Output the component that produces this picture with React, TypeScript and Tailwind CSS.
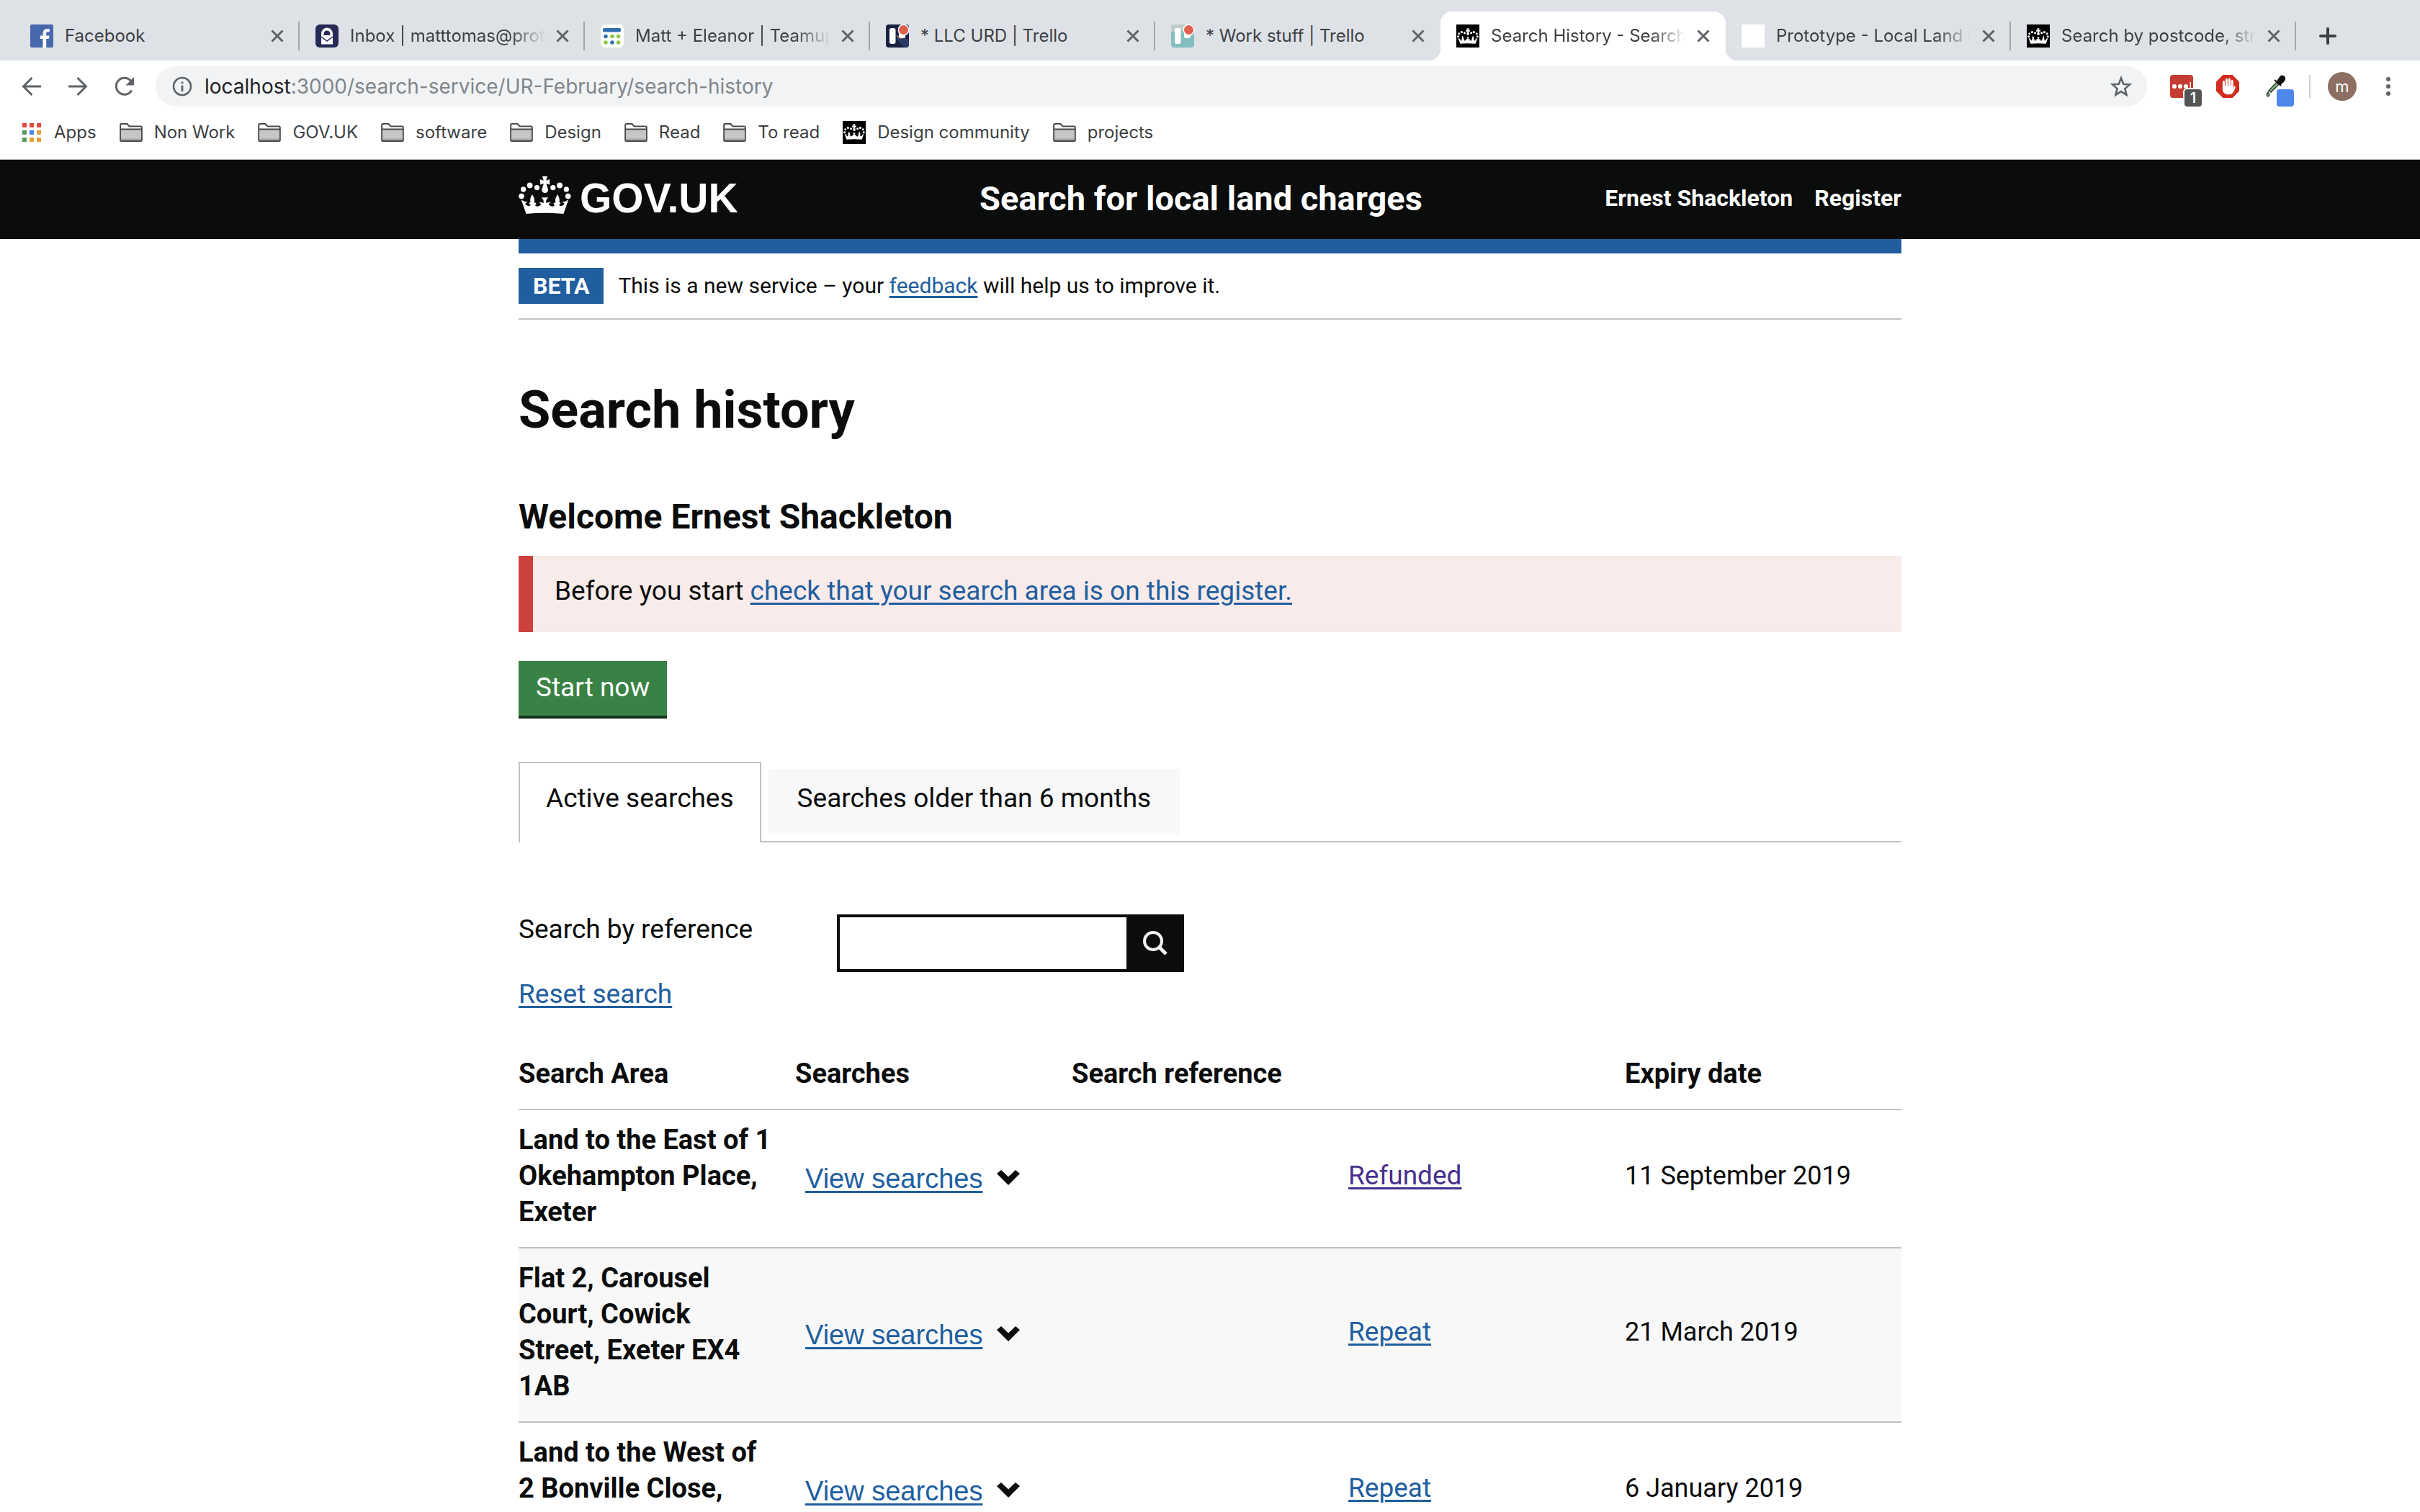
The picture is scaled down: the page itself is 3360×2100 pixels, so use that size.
import React, { useState } from "react";

const LINK = "text-[#205e9f] underline decoration-[3px] underline-offset-[4px]";

function Crown({ className }: { className?: string }) {
  return (
    <svg viewBox="28 38 220 162" className={className} fill="currentColor" aria-hidden="true">
      <circle cx="40" cy="124" r="11.5" />
      <circle cx="48" cy="95" r="11" />
      <circle cx="75" cy="79" r="12" />
      <circle cx="105" cy="88" r="11" />
      <circle cx="172" cy="88" r="11" />
      <circle cx="200" cy="79" r="12" />
      <circle cx="228" cy="95" r="11" />
      <circle cx="235" cy="124" r="11.5" />
      <path d="M127 40H149L143 58 158 53V76L144 71 152 97A13.5 13.5 0 1 1 125 97L133 71 118 76V53L133 58Z" />
      <path d="M39 138L52 146 66 148 56 154C62 168 76 166 80 160C72 160 70 150 78 149C74 136 80 124 85 116C92 126 97 138 93 150C102 150 106 158 96 161C102 170 116 168 122 158L114 148 133 152C134 142 130 136 124 129H152C146 136 142 142 143 152L162 148 154 158C160 168 174 170 180 161C170 158 174 150 183 150C179 138 184 126 191 116C196 124 202 136 198 149C206 150 204 160 196 160C200 166 214 168 220 154L210 148 224 146 237 138L216 198Q138 190 60 198Z" />
    </svg>
  );
}

function CrownIcon() {
  return (
    <span className="flex size-8 shrink-0 items-center justify-center bg-black text-white">
      <Crown className="w-[30px]" />
    </span>
  );
}

function FacebookIcon() {
  return (
    <svg viewBox="0 0 32 32" className="size-8 shrink-0" aria-hidden="true">
      <rect width="32" height="32" rx="2" fill="#4868ad" />
      <path d="M17.5 32V20H14v-4.500h3.500V12.300C17.500 8.300 20 6 23.700 6c1.400 0 2.600.1 3.100.2v4h-2.200c-1.800 0-2.400.9-2.400 2.300v3h4.400l-.6 4.500h-3.800v12z" fill="#fff" />
    </svg>
  );
}

function ProtonIcon() {
  return (
    <svg viewBox="0 0 32 32" className="size-8 shrink-0" aria-hidden="true">
      <rect width="32" height="32" rx="6" fill="#262a55" />
      <path d="M8 13a8 8.500 0 0 1 16 0v14.500H8z" fill="#fff" />
      <path d="M11.500 13a4.500 4.500 0 0 1 9 0v2h-9z" fill="#262a55" />
      <path d="M8 17l8 6 8-6" fill="none" stroke="#262a55" strokeWidth="1.500" />
    </svg>
  );
}

function CalendarIcon() {
  return (
    <svg viewBox="0 0 32 32" className="size-8 shrink-0" aria-hidden="true">
      <rect width="32" height="32" rx="6" fill="#fff" />
      <rect x="3" y="5" width="25" height="5.500" rx="2" fill="#2f6eb0" />
      <circle cx="7" cy="16.500" r="2.700" fill="#2f6eb0" />
      <circle cx="16" cy="16.500" r="2.700" fill="#8cc63f" />
      <circle cx="24.500" cy="16.500" r="2.700" fill="#8cc63f" />
      <circle cx="7" cy="25" r="2.700" fill="#8cc63f" />
      <circle cx="16" cy="25" r="2.700" fill="#2f6eb0" />
      <circle cx="24.500" cy="25" r="2.700" fill="#8cc63f" />
    </svg>
  );
}

function BoardIcon({ dark }: { dark?: boolean }) {
  return (
    <svg viewBox="0 0 32 32" className="size-8 shrink-0 overflow-visible" aria-hidden="true">
      <rect width="32" height="32" rx="4" fill={dark ? "#1b2145" : "#84bfc0"} />
      {dark ? <path d="M14 20l8-4 10 6v4a6 6 0 0 1-6 6z" fill="#2c3a66" /> : <path d="M4 0h24a4 4 0 0 1 4 4v3L0 10V4a4 4 0 0 1 4-4z" fill="#c4cfcc" />}
      {dark && <path d="M14 16l8-3 6 6-10 1z" fill="#8a5b5c" />}
      <rect x="5" y="5" width="8.500" height="22" rx="3" fill="#fff" />
      <rect x="18" y="5" width="9" height="14" rx="3" fill="#fff" />
      <circle cx="24.500" cy="7.500" r="8" fill="#fff" />
      <circle cx="24.500" cy="7.500" r="6.500" fill="#e0604d" />
    </svg>
  );
}

const TABS = [
  { title: "Facebook", icon: <FacebookIcon /> },
  { title: "Inbox | matttomas@prot", icon: <ProtonIcon />, fade: true },
  { title: "Matt + Eleanor | Teamup", icon: <CalendarIcon />, fade: true },
  { title: "* LLC URD | Trello", icon: <BoardIcon dark /> },
  { title: "* Work stuff | Trello", icon: <BoardIcon /> },
  { title: "Search History - Search", icon: <CrownIcon />, fade: true, active: true },
  { title: "Prototype - Local Land C", icon: <span className="size-8 shrink-0 bg-white" />, fade: true },
  { title: "Search by postcode, str", icon: <CrownIcon />, fade: true },
];

function TabStrip() {
  return (
    <div className="flex h-[84px] items-end bg-[#dee1e6] pl-5">
      {TABS.map((tab, i) => (
        <div
          key={tab.title}
          className={
            tab.active
              ? "relative flex h-[68px] min-w-0 basis-[396px] items-center rounded-t-2xl bg-white pl-[22px]"
              : "flex h-[68px] min-w-0 basis-[396px] items-center pl-[22px]"
          }
        >
          {tab.active && (
            <>
              <span className="absolute bottom-0 -left-4 size-4 bg-[radial-gradient(circle_at_0_0,transparent_16px,white_16px)]" />
              <span className="absolute -right-4 bottom-0 size-4 bg-[radial-gradient(circle_at_100%_0,transparent_16px,white_16px)]" />
            </>
          )}
          {tab.icon}
          <span
            className={
              tab.fade
                ? "ml-4 min-w-0 flex-1 overflow-hidden whitespace-nowrap [mask-image:linear-gradient(to_right,black_calc(100%-52px),transparent_calc(100%-4px))]"
                : "ml-4 min-w-0 flex-1 overflow-hidden whitespace-nowrap"
            }
          >
            {tab.title}
          </span>
          <button type="button" aria-label={"Close " + tab.title} className="ml-1 flex size-8 shrink-0 items-center justify-center">
            <svg viewBox="0 0 18 18" className="size-[18px]" stroke="#5f6368" strokeWidth="3" aria-hidden="true">
              <path d="M1.500 1.500l15 15M16.500 1.500l-15 15" />
            </svg>
          </button>
          <span
            className={
              tab.active || TABS[i + 1]?.active
                ? "ml-[13px] h-10 w-[2px] shrink-0"
                : "ml-[13px] h-10 w-[2px] shrink-0 bg-[#a2a5aa]"
            }
          />
        </div>
      ))}
      <button type="button" aria-label="New tab" className="ml-7 flex h-[68px] w-8 shrink-0 items-center justify-center">
        <svg viewBox="0 0 24 24" className="size-6" stroke="#3c4043" strokeWidth="4" strokeLinecap="round" aria-hidden="true">
          <path d="M12 2v20M2 12h20" />
        </svg>
      </button>
    </div>
  );
}

function Toolbar() {
  return (
    <div className="flex h-[72px] items-center gap-8 bg-white pl-7">
      <button type="button" aria-label="Back" className="size-8">
        <svg viewBox="0 0 32 32" className="size-8" fill="none" stroke="#5f6368" strokeWidth="3" aria-hidden="true">
          <path d="M29 16H5M16.500 4L4.500 16l12 12" />
        </svg>
      </button>
      <button type="button" aria-label="Forward" className="size-8">
        <svg viewBox="0 0 32 32" className="size-8" fill="none" stroke="#5f6368" strokeWidth="3" aria-hidden="true">
          <path d="M3 16h24M15.500 4l12 12-12 12" />
        </svg>
      </button>
      <button type="button" aria-label="Reload" className="size-8">
        <svg viewBox="0 0 32 32" className="size-8" aria-hidden="true">
          <path d="M26.800 21.500A11.500 11.500 0 1 1 25.500 8.200" fill="none" stroke="#5f6368" strokeWidth="3" />
          <path d="M30 3v11.500H18.500z" fill="#5f6368" />
        </svg>
      </button>
      <div className="-ml-1 flex h-14 min-w-0 flex-1 items-center rounded-full bg-[#f1f3f4] pr-5 pl-[23px]">
        <svg viewBox="0 0 28 28" className="size-7 shrink-0" aria-hidden="true">
          <circle cx="14" cy="14" r="12" fill="none" stroke="#5f6368" strokeWidth="2.600" />
          <path d="M12.600 12.500h2.800V21h-2.800zM12.600 7.500h2.800v2.800h-2.800z" fill="#5f6368" />
        </svg>
        <span className="ml-[17px] flex-1 text-[28px] text-[#80868b]">
          <span className="text-[#202124]">localhost</span>:3000/search-service/UR-February/search-history
        </span>
        <button type="button" aria-label="Bookmark this page" className="size-8">
          <svg viewBox="0 0 32 32" className="size-8" fill="none" stroke="#5f6368" strokeWidth="2.600" aria-hidden="true">
            <path d="M16 4.500l3.300 8.200 8.800.7-6.700 5.700 2.100 8.600L16 23.100l-7.500 4.600 2.100-8.600-6.700-5.700 8.800-.7z" />
          </svg>
        </button>
      </div>
      <div className="flex items-center pr-7">
        <button type="button" aria-label="Password manager, 1 entry" className="relative size-8 rounded-sm bg-[#c43d33]">
          <svg viewBox="0 0 32 32" className="size-8" fill="#fff" aria-hidden="true">
            <circle cx="6" cy="16" r="3" />
            <circle cx="14" cy="16" r="3" />
            <circle cx="22" cy="16" r="3" />
            <path d="M27.500 10h1.500v11h-1.500z" />
          </svg>
          <span className="absolute top-[18px] left-[18px] flex h-[28px] w-[28px] items-center justify-center rounded-md border-2 border-white bg-[#555] text-[20px] leading-none font-semibold text-white">
            1
          </span>
        </button>
        <button type="button" aria-label="Ad blocker" className="ml-8 size-8">
          <svg viewBox="0 0 32 32" className="size-8" aria-hidden="true">
            <path d="M9.400 0h13.200L32 9.400v13.200L22.600 32H9.400L0 22.600V9.400z" fill="#d22d20" />
            <path d="M10.400 18V9.500M14.400 16V6.500M18.400 16V6M22.200 17V8.500" fill="none" stroke="#fff" strokeWidth="3" strokeLinecap="round" />
            <path d="M8.900 15h14.800v3.500l1.200-2.300c.8-1 2-.4 1.800.7-.7 3-1.800 5.600-3.200 7.700-1.500 2.100-3.600 2.700-6.200 2.700-5 0-8.400-2.800-8.400-7.300z" fill="#fff" />
          </svg>
        </button>
        <button type="button" aria-label="Colour picker" className="relative ml-9 size-8">
          <svg viewBox="0 0 32 32" className="size-8" aria-hidden="true">
            <path d="M5 22L16 10l3 3L8 24z" fill="#7cc07c" stroke="#333" strokeWidth="1.500" />
            <path d="M13 7l9 8M17 9l4-6c2-3 7-1 6 3-.5 3-3 4-6 7z" fill="#111" stroke="#111" strokeWidth="2" />
            <path d="M4 24c3 3 2 6 0 6s-3-3 0-6z" fill="#5aa05a" stroke="#333" strokeWidth="1.200" />
          </svg>
          <span className="absolute top-5 left-4 size-6 rounded-sm bg-[#4f86ec]" />
        </button>
        <span className="ml-[29px] h-8 w-[2px] bg-[#d0d2d5]" />
        <button type="button" aria-label="Profile" className="ml-6 flex size-10 items-center justify-center rounded-full bg-[#8c6e63] text-[22px] leading-none text-white">
          m
        </button>
        <button type="button" aria-label="Menu" className="ml-7 flex h-8 w-8 items-center justify-center">
          <svg viewBox="0 0 8 28" className="h-7" fill="#5f6368" aria-hidden="true">
            <circle cx="4" cy="4" r="3" />
            <circle cx="4" cy="14" r="3" />
            <circle cx="4" cy="24" r="3" />
          </svg>
        </button>
      </div>
    </div>
  );
}

function FolderIcon() {
  return (
    <svg viewBox="0 0 32 28" className="h-7 w-8 shrink-0" aria-hidden="true">
      <path d="M1.200 24.500V3.500a1.500 1.500 0 0 1 1.500-1.500h7.800l3 3.500h15.800a1.500 1.500 0 0 1 1.500 1.500v17.500a1.500 1.500 0 0 1-1.500 1.500H2.700a1.500 1.500 0 0 1-1.500-1.500z" fill="#fff" stroke="#484848" strokeWidth="2" />
      <path d="M2 10h28v14.800H2z" fill="#c6c6c6" />
      <path d="M2 22.500h28v2.500H2z" fill="#a6a6a6" />
      <path d="M1.200 9.500h29.600" stroke="#484848" strokeWidth="2" />
    </svg>
  );
}

function AppsIcon() {
  const colors = ["#e2493d", "#e2493d", "#e2493d", "#549b5c", "#4285f4", "#e2a33b", "#549b5c", "#e2a33b", "#e2a33b"];
  return (
    <span className="grid size-[26px] shrink-0 grid-cols-3 gap-1" aria-hidden="true">
      {colors.map((c, i) => (
        <span key={i} style={{ backgroundColor: c }} />
      ))}
    </span>
  );
}

const BOOKMARKS = ["Non Work", "GOV.UK", "software", "Design", "Read", "To read", "Design community", "projects"];

function BookmarksBar() {
  return (
    <nav aria-label="Bookmarks" className="flex h-[66px] items-center gap-8 border-b border-[#b6b4b6] bg-white pb-[10px] pl-[31px]">
      <a href="#apps" className="flex items-center gap-[18px]">
        <AppsIcon />
        Apps
      </a>
      {BOOKMARKS.map((name) => (
        <a key={name} href="#bookmark" className="flex items-center gap-4 whitespace-nowrap">
          {name === "Design community" ? <CrownIcon /> : <FolderIcon />}
          {name}
        </a>
      ))}
    </nav>
  );
}

function Header() {
  return (
    <header className="bg-[#0b0c0c] text-white">
      <div className="mx-auto flex h-[110px] max-w-[1920px] items-center pb-1 font-bold">
        <a href="#home" className="flex w-1/3 items-center gap-3 font-['Liberation_Sans',sans-serif] text-[57px] leading-none">
          <Crown className="mb-2 w-[73px]" />
          GOV.UK
        </a>
        <a href="#service" className="text-[47px] leading-none whitespace-nowrap">
          Search for local land charges
        </a>
        <nav aria-label="Account" className="flex flex-1 justify-end gap-[30px] text-[32px] leading-none whitespace-nowrap">
          <a href="#account">Ernest Shackleton</a>
          <a href="#register">Register</a>
        </nav>
      </div>
    </header>
  );
}

const ROWS = [
  { area: "Land to the East of 1 Okehampton Place, Exeter", action: "Refunded", expiry: "11 September 2019" },
  { area: "Flat 2, Carousel Court, Cowick Street, Exeter EX4 1AB", action: "Repeat", expiry: "21 March 2019" },
  { area: "Land to the West of 2 Bonville Close,", action: "Repeat", expiry: "6 January 2019" },
];

function SearchTable() {
  return (
    <table className="mt-11 w-full table-fixed border-separate border-spacing-0 text-left">
      <thead>
        <tr className="text-[38px] leading-[50px]">
          {["Search Area", "Searches", "Search reference", "", "Expiry date"].map((h, i) => (
            <th key={i} scope="col" className="border-b-2 border-[#bfc1c3] pt-4 pb-6 font-bold">
              {h}
            </th>
          ))}
        </tr>
      </thead>
      <tbody>
        {ROWS.map((row) => (
          <tr key={row.area} className="h-48 text-[36px] leading-[50px] even:bg-[#f8f8f8]">
            <th scope="row" className="border-b-2 border-[#bfc1c3] pt-4 pr-6 pb-6 align-top text-[38px] font-bold">
              {row.area}
            </th>
            <td className="border-b-2 border-[#bfc1c3] py-6 pl-[14px]">
              <button type="button" className="flex items-center gap-5 font-['Liberation_Sans',sans-serif] text-[38px] whitespace-nowrap">
                <span className={LINK}>View searches</span>
                <svg viewBox="0 0 32 22" className="mb-1 w-8" aria-hidden="true">
                  <path d="M0 6L6 1 16 10.500 26 1l6 5-16 16z" fill="#0b0c0c" />
                </svg>
              </button>
            </td>
            <td className="border-b-2 border-[#bfc1c3]" />
            <td className="border-b-2 border-[#bfc1c3] pt-4 pb-6">
              <a
                href="#search"
                className={
                  row.action === "Refunded"
                    ? "text-[37px] text-[#46308e] underline decoration-[3px] underline-offset-[4px]"
                    : "text-[37px] text-[#205e9f] underline decoration-[3px] underline-offset-[4px]"
                }
              >
                {row.action}
              </a>
            </td>
            <td className="border-b-2 border-[#bfc1c3] pt-4 pb-6">{row.expiry}</td>
          </tr>
        ))}
      </tbody>
    </table>
  );
}

export default function App() {
  const [reference, setReference] = useState("");
  return (
    <div className="flex h-screen flex-col overflow-hidden bg-white font-[Inter,sans-serif] text-[24px] text-[#3c4043]">
      <div className="shrink-0">
        <TabStrip />
        <Toolbar />
        <BookmarksBar />
      </div>
      <div className="min-h-0 flex-1 overflow-hidden font-[Roboto,sans-serif] text-[37px] leading-[50px] text-[#0b0c0c]">
        <Header />
        <div className="mx-auto max-w-[1920px]">
          <div className="h-5 bg-[#205e9f]" />
          <div className="flex items-center border-b-2 border-[#bfc1c3] py-5 text-[30px]">
            <strong className="mr-5 bg-[#205e9f] px-5 text-[32px] text-white">BETA</strong>
            <span>
              This is a new service – your <a href="#feedback" className={LINK}>feedback</a> will help us to improve it.
            </span>
          </div>
          <main className="pt-[86px]">
            <h1 className="text-[72px] leading-[80px] font-bold">Search history</h1>
            <h2 className="mt-[78px] text-[48px] leading-[60px] font-bold">Welcome Ernest Shackleton</h2>
            <p className="mt-6 border-l-[20px] border-[#ce403c] bg-[#f9ebea] pt-6 pb-8 pl-[30px]">
              Before you start <a href="#check" className={LINK}>check that your search area is on this register.</a>
            </p>
            <button type="button" className="mt-10 block bg-[#398144] px-6 pt-3 pb-[14px] text-white shadow-[0_4px_0_#15321c]">
              Start now
            </button>
            <div role="tablist" className="mt-16 flex items-start border-b-2 border-[#bfc1c3]">
              <button
                type="button"
                role="tab"
                aria-selected="true"
                className="-mb-[2px] border-2 border-b-0 border-[#bfc1c3] bg-white px-9 pt-6 pb-9"
              >
                Active searches
              </button>
              <button type="button" role="tab" aria-selected="false" className="mt-[10px] ml-[10px] bg-[#f8f8f8] px-10 pt-4 pb-6">
                Searches older than 6 months
              </button>
            </div>
            <div className="mt-24 flex items-start">
              <div className="flex w-[442px] flex-col items-start gap-10">
                <label htmlFor="reference">Search by reference</label>
                <a href="#reset" className={LINK}>Reset search</a>
              </div>
              <form className="mt-1 flex" onSubmit={(e) => e.preventDefault()}>
                <input
                  id="reference"
                  type="text"
                  value={reference}
                  onChange={(e) => setReference(e.target.value)}
                  className="h-20 w-[402px] border-4 border-r-0 border-[#0b0c0c] bg-white px-3 outline-none"
                />
                <button type="submit" aria-label="Search" className="flex size-20 items-center justify-center bg-[#0b0c0c]">
                  <svg viewBox="0 0 34 34" className="size-[34px]" fill="none" stroke="#f2f2f2" strokeWidth="4" aria-hidden="true">
                    <circle cx="14" cy="14" r="12" />
                    <path d="M22.500 22.500L32 32" strokeWidth="5" />
                  </svg>
                </button>
              </form>
            </div>
            <SearchTable />
          </main>
        </div>
      </div>
    </div>
  );
}
